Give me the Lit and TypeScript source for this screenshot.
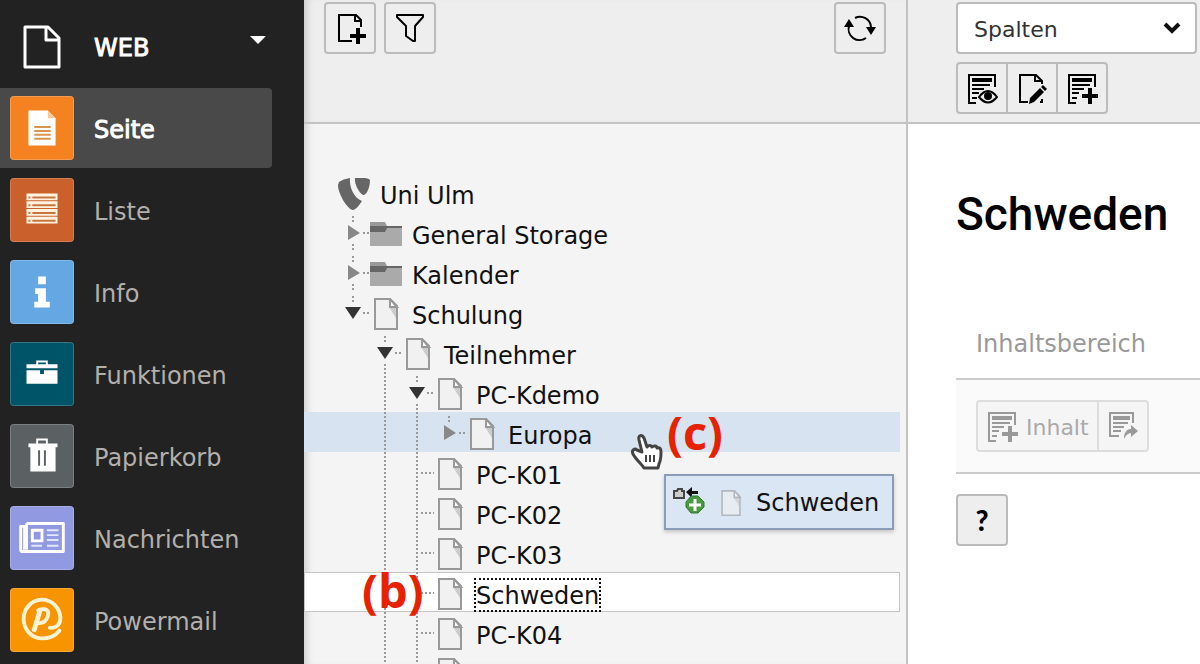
import { LitElement, html, css, svg } from "lit";
import { customElement } from "lit/decorators.js";
import { classMap } from "lit/directives/class-map.js";

type Cell = "none" | "line" | "leaf" | "open" | "closed" | "openEnd" | "closedEnd";

interface Row {
  label: string;
  icon: "root" | "folder" | "page";
  cells: Cell[];
  state?: "target" | "selected";
}

interface Module {
  label: string;
  tone: string;
  icon: unknown;
  active?: boolean;
}

const modules: Module[] = [
  {
    label: "Seite",
    tone: "orange",
    active: true,
    icon: svg`<path fill="#fff" d="M18 14h20l8 8v28H18z"/><path fill="#f8c99b" d="M38 14l8 8h-8z"/>
      <path stroke="#d9954f" stroke-width="2" d="M24 31h17M24 35h17M24 39h17M24 43h17"/>`,
  },
  {
    label: "Liste",
    tone: "rust",
    icon: svg`<path fill="#fff3e2" d="M16 15h32v7H16zM16 23h32v7H16zM16 31h32v7H16zM16 39h32v7H16z"/>
      <path stroke="#c9743f" stroke-width="2" d="M18 19h2M22 19h24M18 27h2M22 27h24M18 35h2M22 35h24M18 43h2M22 43h24"/>`,
  },
  {
    label: "Info",
    tone: "blue",
    icon: svg`<path fill="#fff" d="M28 16h8v8h-8zM25 28h11v14h4v6H24v-6h4v-8h-3z"/>`,
  },
  {
    label: "Funktionen",
    tone: "teal",
    icon: svg`<path fill="#fff" fill-rule="evenodd" d="M26 18h12v4h10v4H16v-4h10zM28 20v2h8v-2z"/>
      <path fill="#fff" d="M16 28h14v4h4v-4h14v14H16z"/>`,
  },
  {
    label: "Papierkorb",
    tone: "grey",
    icon: svg`<path fill="#fff" fill-rule="evenodd" d="M26 14h12v5h10v4h-2v25H20V23h-2v-4h8zM28 16v3h8v-3zM28 26v16h2V26zM34 26v16h2V26z"/>`,
  },
  {
    label: "Nachrichten",
    tone: "violet",
    icon: svg`<path fill="none" stroke="#fff" stroke-width="3" stroke-linejoin="round" d="M16 17h38v29H12a2 2 0 0 1-2-2V20h4v24M16 17v27"/>
      <path fill="none" stroke="#fff" stroke-width="3" d="M22 24h10v11H22z"/>
      <path stroke="#e3e6ff" stroke-width="2" d="M37 24h12M37 29h12M37 34h12M21 40h11M37 40h12"/>`,
  },
  {
    label: "Powermail",
    tone: "amber",
    icon: svg`<g fill="none" stroke="#fff3d6" stroke-linecap="round"><path stroke-width="4" d="M50 43C45 49 39 51 32 51A19 20 0 1 1 51 30C51 36 47 41 40 40"/>
      <path stroke-width="5" d="M30 22L24 42"/><path stroke-width="4" d="M28 22c8-3 12 0 10 6c-2 6-6 8-11 7"/></g>`,
  },
];

const rows: Row[] = [
  { label: "Uni Ulm", icon: "root", cells: [] },
  { label: "General Storage", icon: "folder", cells: ["closed"] },
  { label: "Kalender", icon: "folder", cells: ["closed"] },
  { label: "Schulung", icon: "page", cells: ["openEnd"] },
  { label: "Teilnehmer", icon: "page", cells: ["none", "open"] },
  { label: "PC-Kdemo", icon: "page", cells: ["none", "line", "open"] },
  { label: "Europa", icon: "page", cells: ["none", "line", "line", "closedEnd"], state: "target" },
  { label: "PC-K01", icon: "page", cells: ["none", "line", "leaf"] },
  { label: "PC-K02", icon: "page", cells: ["none", "line", "leaf"] },
  { label: "PC-K03", icon: "page", cells: ["none", "line", "leaf"] },
  { label: "Schweden", icon: "page", cells: ["none", "line", "leaf"], state: "selected" },
  { label: "PC-K04", icon: "page", cells: ["none", "line", "leaf"] },
  { label: "", icon: "page", cells: ["none", "line", "leaf"] },
];

const rowIcons = {
  root: svg`<path fill="#666" d="M1 4Q5 1 12 0C11 9 16 20 24 23C21 28 17 32 15 32C10 32 0 16 0 7Z"/>
    <path fill="#666" d="M17 0C23-1 30 0 32 2C32 9 29 16 26 17C22 17 16 6 17 0Z"/>`,
  folder: svg`<path fill="#aaa" d="M0 8h32v20H0z"/><path fill="#999" d="M0 4h15l2 4H0z"/>
    <path fill="#666" d="M0 8h32v2H17l-2 4H0z"/>`,
  page: svg`<path fill="#f1f1f1" stroke="#999" stroke-width="2" d="M5 1h15l7 7v23H5z"/>
    <path fill="#ccc" d="M19 9h7v11z"/><path fill="#fff" stroke="#999" stroke-width="2" d="M20 1v8h7z"/>`,
};

const sheet = svg`<path fill="none" stroke="currentColor" stroke-width="2" d="M10 31H3V3h26v12"/>
  <path stroke="currentColor" stroke-width="4" d="M6 8h20"/>
  <path stroke="currentColor" stroke-width="2" d="M6 13h18M6 17h12M6 21h7M6 26h5"/>`;
const plus = svg`<path stroke="currentColor" stroke-width="4" d="M16 24h16M24 16v16"/>`;

const icon = (content: unknown) =>
  html`<svg class="icon" viewBox="0 0 32 32" aria-hidden="true">${content}</svg>`;

@customElement("app-root")
export class AppRoot extends LitElement {
  static styles = css`
    :host {
      display: grid;
      grid-template-columns: 304px minmax(0, 604fr) minmax(0, 292fr);
      height: 100vh;
      overflow: hidden;
      font: 24px/32px "DejaVu Sans", Verdana, sans-serif;
      color: #111;
      background: #fff;
    }
    * { box-sizing: border-box; }
    svg { display: block; flex: none; }
    button, select { font: inherit; color: inherit; margin: 0; }

    .modules {
      display: flex;
      flex-direction: column;
      gap: 2px;
      padding: 6px 32px 0 0;
      background: #222;
      color: #b3b0ac;
    }
    .module {
      display: flex;
      align-items: center;
      gap: 20px;
      height: 80px;
      flex: none;
      padding: 4px 0 0 10px;
      border: 0;
      background: none;
      color: inherit;
      text-align: left;
      text-decoration: none;
      border-radius: 0 4px 4px 0;
    }
    .module.active { background: #494949; }
    .module.active, .module.group { color: #fff; -webkit-text-stroke: 1px #fff; }
    .module.group .caret { margin: 0 6px 16px auto; }
    .module svg.tile { margin-top: -4px; }
    .tile { width: 64px; height: 64px; border-radius: 4px; border: 1px solid #ffffff33; }
    .tile.plain { border: 0; }
    .orange { background: #f58220; }
    .rust { background: #ca602c; }
    .blue { background: #65a7e2; }
    .teal { background: #005468; }
    .grey { background: #5b6063; }
    .violet { background: #9199e0; }
    .amber { background: #f79400; }

    .pane { display: flex; flex-direction: column; min-width: 0; min-height: 0; }
    .tree-pane {
      position: relative;
      background: #f4f4f4;
      border-right: 2px solid #c3c3c3;
      box-shadow: inset 8px 0 8px -6px #0000002e;
    }
    .bar {
      height: 124px;
      flex: none;
      border-bottom: 2px solid #c3c3c3;
      background: #eee;
    }
    .tree-pane .bar {
      display: flex;
      align-items: flex-start;
      gap: 8px;
      padding: 2px 20px 0;
      box-shadow: inset 8px 0 8px -6px #0000002e;
    }
    .push { margin-left: auto; }
    .btn {
      display: inline-flex;
      align-items: center;
      justify-content: center;
      gap: 8px;
      min-width: 52px;
      height: 52px;
      padding: 0 8px;
      border: 2px solid #bbb;
      border-radius: 4px;
      background: #eee;
      color: #000;
    }
    .icon { width: 32px; height: 32px; }
    .group-row { display: flex; }
    .group-row .btn + .btn { margin-left: -2px; border-radius: 0; }
    .group-row .btn:first-child { border-radius: 4px 0 0 4px; }
    .group-row .btn:last-child { border-radius: 0 4px 4px 0; }

    .tree { list-style: none; margin: 48px 0 0; padding: 0 6px 0 0; }
    .row {
      display: flex;
      height: 40px;
      padding-left: 34px;
    }
    .row.target { background: #d7e3f1; }
    .row.selected { background: #fff; box-shadow: inset 0 0 0 1px #c6c6c6; }
    .row .icon { margin-top: 6px; }
    .label { margin: 6px 0 0 8px; padding: 2px 2px 0; height: 34px; white-space: nowrap; }
    .selected .label { outline: 2px dotted #111; outline-offset: -2px; }
    .cell { width: 32px; height: 40px; }
    .toggle { padding: 0; border: 0; background: none; flex: none; }

    .drag {
      position: absolute;
      left: 360px;
      top: 474px;
      display: flex;
      align-items: center;
      width: 230px;
      height: 56px;
      padding: 2px 0 0 6px;
      border: 2px solid #8a9cb8;
      background: #dae6f4;
      box-shadow: 0 2px 4px #0003;
    }
    .drag .thumb { width: 26px; height: 26px; margin: 0 12px; opacity: 0.6; }
    .note {
      position: absolute;
      font: 700 47px/56px "Open Sans", Carlito, sans-serif;
      color: #e62200;
    }
    .note-b { left: 58px; top: 562px; }
    .note-c { left: 363px; top: 404px; }
    .pointer { position: absolute; left: 325px; top: 432px; width: 36px; height: 40px; }

    .main { background: #fff; }
    .main .bar {
      display: flex;
      flex-direction: column;
      gap: 8px;
      padding: 2px 3px 0 48px;
    }
    .select { position: relative; display: flex; }
    .select select {
      appearance: none;
      width: 100%;
      height: 52px;
      padding: 4px 40px 0 16px;
      border: 2px solid #bbb;
      border-radius: 4px;
      background: #fff;
      font-size: 22px;
      color: #333;
    }
    .select svg { position: absolute; right: 16px; top: 19px; pointer-events: none; }
    .content { padding-left: 48px; }
    h1 {
      margin: 56px 0 0;
      font: 500 46px/68px Roboto, "Arial Narrow", sans-serif;
      color: #000;
    }
    h2 { margin: 80px 0 0; padding-left: 20px; font-weight: 400; font-size: 24px; line-height: 32px; color: #999; }
    .area {
      margin: 18px 0 20px;
      padding: 20px;
      border: solid #ccc;
      border-width: 2px 0;
      background: #fafafa;
    }
    .area .btn { border-color: #ddd; background: #f5f5f5; color: #999; font-size: 22px; }
    .area .btn span { color: #aaa; padding-top: 4px; }
    .help { font: 900 28px/32px Lato, sans-serif; }
  `;

  private cell(kind: Cell) {
    const toggle = kind !== "none" && kind !== "line" && kind !== "leaf";
    const open = kind === "open" || kind === "openEnd";
    const down = kind === "closed" || kind === "open";
    const art = svg`<g stroke="#999" stroke-width="2" stroke-dasharray="2 2">
      ${kind === "none" ? null : toggle
        ? svg`<path d="M15 4v6"/>${down ? svg`<path d="M15 32v8"/>` : null}<path d="M25 21h7"/>`
        : svg`<path d="M15 0v40"/>`}
      ${kind === "leaf" ? svg`<path d="M19 21h14"/>` : null}</g>
      ${toggle
        ? open
          ? svg`<path fill="#333" d="M7 15h16l-8 12z"/>`
          : svg`<path fill="#888" d="M10 13v15l12-7z"/>`
        : null}`;
    const box = html`<svg class="cell" viewBox="0 0 32 40" aria-hidden="true">${art}</svg>`;
    return toggle
      ? html`<button class="toggle" aria-label=${open ? "Zuklappen" : "Aufklappen"}>${box}</button>`
      : box;
  }

  render() {
    return html`
      <nav class="modules">
        <button class="module group" aria-expanded="true">
          <svg class="tile plain" viewBox="0 0 64 64" aria-hidden="true">
            <path fill="none" stroke="#fff" stroke-width="3" stroke-linejoin="round" d="M15 13h23l11 11v29H15zM36 13v13h13"/>
          </svg>
          <span>WEB</span>
          <svg class="caret" width="16" height="10" viewBox="0 0 16 10" aria-hidden="true"><path fill="#fff" d="M0 1h16l-8 8z"/></svg>
        </button>
        ${modules.map(
          (m) => html`<a href="#" class=${classMap({ module: true, active: !!m.active })}>
            <svg class="tile ${m.tone}" viewBox="0 0 64 64" aria-hidden="true">${m.icon}</svg>
            <span>${m.label}</span>
          </a>`
        )}
      </nav>

      <section class="pane tree-pane">
        <div class="bar">
          <button class="btn" aria-label="Neue Seite">
            ${icon(svg`<path fill="none" stroke="currentColor" stroke-width="2" d="M18 29H5V3h17l5 5v7M21 3v6h6"/>${plus}`)}
          </button>
          <button class="btn" aria-label="Filter">
            ${icon(svg`<path fill="none" stroke="currentColor" stroke-width="2" stroke-linejoin="round" d="M3 3h26v2l-8 9v15h-2l-7-5V14L3 5z"/>`)}
          </button>
          <button class="btn push" aria-label="Neu laden">
            ${icon(svg`<path fill="none" stroke="currentColor" stroke-width="2" d="M11 6A11 11 0 0 1 27 15M5 14A11 11 0 0 0 22 26"/>
              <path fill="currentColor" d="M5 7l5 8H0zM27 23l5-8H22z"/>`)}
          </button>
        </div>
        <ul class="tree" role="tree">
          ${rows.map(
            (r) => html`<li role="treeitem" class=${classMap({ row: true, [r.state ?? "idle"]: true })}>
              ${r.cells.map((c) => this.cell(c))} ${icon(rowIcons[r.icon])}
              <span class="label">${r.label}</span>
            </li>`
          )}
        </ul>

        <div class="drag">
          <svg width="34" height="32" viewBox="0 0 34 32" aria-hidden="true">
            <path fill="#ccc" stroke="#444" stroke-width="2" d="M2 4h3l1-2h4v2h2v7H2z"/>
            <path fill="#111" d="M14 5l6-5v4h6v3h-6v4z"/>
            <path fill="#4a9a3f" stroke="#2f7a2c" d="M19 9h7l6 6v5l-6 6h-7l-5-6v-5z"/>
            <path stroke="#fff" stroke-width="3" d="M17 18h12M23 12v12"/>
          </svg>
          <svg class="thumb" viewBox="0 0 32 32" aria-hidden="true">${rowIcons.page}</svg>
          <span>Schweden</span>
        </div>
        <svg class="pointer" viewBox="0 0 36 40" aria-hidden="true">
          <path fill="#fff" stroke="#444" stroke-width="3" stroke-linejoin="round"
            d="M13 20L10 8C9 3 13 2 15 6l3 9c1-2 4-2 5 0c2-2 5-1 5 1c3-1 4 1 4 4c0 6 0 8-2 12L29 36H15C13 32 7 28 4 22C2 18 6 16 8 18z"/>
          <path stroke="#444" stroke-width="2" d="M17 23v7M21 23v7M25 23v7"/>
        </svg>
        <span class="note note-b">(b)</span>
        <span class="note note-c">(c)</span>
      </section>

      <main class="pane main">
        <div class="bar">
          <div class="select">
            <select aria-label="Ansicht"><option>Spalten</option></select>
            <svg width="18" height="14" viewBox="0 0 18 14" aria-hidden="true"><path fill="none" stroke="#111" stroke-width="4" d="M2 3l7 7l7-7"/></svg>
          </div>
          <div class="group-row">
            <button class="btn" aria-label="Ansehen">
              ${icon(svg`${sheet}<path fill="#eee" stroke="currentColor" stroke-width="2" d="M13 25Q22 13 31 25Q22 36 13 25z"/>
                <circle cx="22" cy="24" r="4" fill="currentColor"/>`)}
            </button>
            <button class="btn" aria-label="Seite bearbeiten">
              ${icon(svg`<path fill="none" stroke="currentColor" stroke-width="2" d="M12 30H4V3h16l6 6v3M19 3v6h7M24 30h2v-3"/>
                <path fill="currentColor" d="M13 32l1-6l10-10l4 4l-10 10zM25 15l2-2l4 4l-2 2z"/>`)}
            </button>
            <button class="btn" aria-label="Inhalt hinzufügen">${icon(svg`${sheet}${plus}`)}</button>
          </div>
        </div>
        <div class="content">
          <h1>Schweden</h1>
          <h2>Inhaltsbereich</h2>
          <div class="area">
            <div class="group-row">
              <button class="btn">${icon(svg`${sheet}${plus}`)}<span>Inhalt</span></button>
              <button class="btn" aria-label="Einfügen">
                ${icon(svg`<path fill="none" stroke="currentColor" stroke-width="2" d="M12 26H3V3h23v10"/>
                  <path stroke="currentColor" stroke-width="4" d="M6 8h17"/>
                  <path stroke="currentColor" stroke-width="2" d="M6 13h15M6 17h11M6 21h8"/>
                  <path fill="currentColor" d="M17 29c0-7 3-10 7-10v-4l7 6l-7 6v-4c-3 0-5 2-7 6z"/>`)}
              </button>
            </div>
          </div>
          <button class="btn help" aria-label="Hilfe">?</button>
        </div>
      </main>
    `;
  }
}
